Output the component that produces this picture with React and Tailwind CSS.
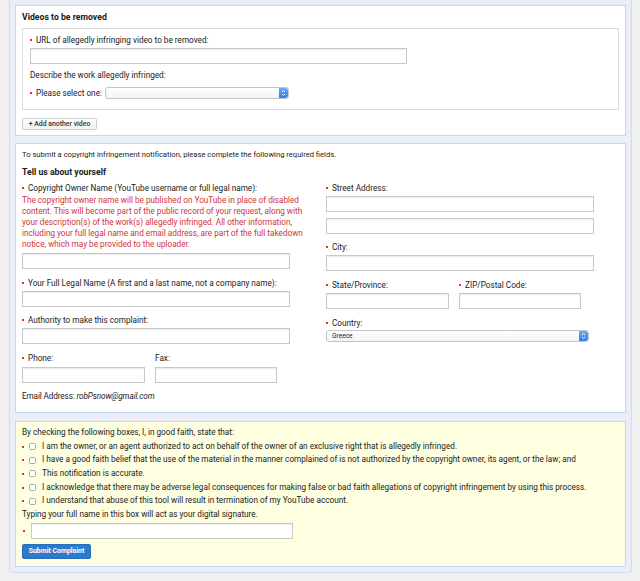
import React from "react";

const Req = ({ className = "mr-[4px]" }) => (
  <span className={`inline-block w-[2px] h-[2px] bg-[#e0303a] align-middle shrink-0 ${className}`} />
);

const Input = ({ w, className = "" }) => (
  <div
    className={`h-[16px] border border-[#c9c9c9] bg-white shadow-[inset_0_1px_1px_rgba(0,0,0,0.08)] ${className}`}
    style={{ width: w }}
  />
);

const Stepper = () => (
  <div className="w-[9px] h-full rounded-r-[3px] bg-gradient-to-b from-[#6aa9f7] to-[#2f7ee8] flex items-center justify-center">
    <svg width="5" height="8" viewBox="0 0 5 8" fill="none" stroke="white" strokeWidth="0.9">
      <path d="M1 3 L2.5 1.5 L4 3" />
      <path d="M1 5 L2.5 6.5 L4 5" />
    </svg>
  </div>
);

const Select = ({ w, value }) => (
  <div
    className="h-[12px] flex items-stretch border border-[#c5c5c5] rounded-[3px] bg-gradient-to-b from-white to-[#f3f3f3]"
    style={{ width: w }}
  >
    <div className="flex-1 flex items-center pl-[5px] text-[6.6px] text-[#222] leading-none">{value}</div>
    <Stepper />
  </div>
);

const Label = ({ req = true, children, className = "" }) => (
  <div className={`h-[10px] leading-[10px] text-[8.2px] text-[#1b1b1b] flex items-center whitespace-nowrap ${className}`}>
    {req && <Req />}
    <span>{children}</span>
  </div>
);

const Checkbox = () => (
  <span className="inline-block w-[7px] h-[7px] border border-[#a9a9a9] rounded-[1.5px] bg-white mr-[6px] shrink-0" />
);

const statements = [
  "I am the owner, or an agent authorized to act on behalf of the owner of an exclusive right that is allegedly infringed.",
  "I have a good faith belief that the use of the material in the manner complained of is not authorized by the copyright owner, its agent, or the law; and",
  "This notification is accurate.",
  "I acknowledge that there may be adverse legal consequences for making false or bad faith allegations of copyright infringement by using this process.",
  "I understand that abuse of this tool will result in termination of my YouTube account.",
];

const notice = [
  "The copyright owner name will be published on YouTube in place of disabled",
  "content. This will become part of the public record of your request, along with",
  "your description(s) of the work(s) allegedly infringed. All other information,",
  "including your full legal name and email address, are part of the full takedown",
  "notice, which may be provided to the uploader.",
];

export default function App() {
  return (
    <div className="min-h-[581px] bg-[#f0f0f0] pl-[9px] font-['Roboto',sans-serif] text-[#1b1b1b]">
      <div className="w-[623px] bg-[#e9eef9] border-x border-b border-[#d3dcef] rounded-b-[4px] px-[5px] pt-[5px] pb-[5px]">
        {/* Videos to be removed */}
        <div className="bg-white border border-[#c7d5ef] px-[6px] pt-[6px] pb-[5px]">
          <div className="text-[8.7px] font-bold leading-[10px]">Videos to be removed</div>
          <div className="mt-[6px] border border-[#dcdcdc] px-[7px] pt-[6px] pb-[10px]">
            <Label>URL of allegedly infringing video to be removed:</Label>
            <Input w={377} className="mt-[3px]" />
            <Label req={false} className="mt-[6px]">Describe the work allegedly infringed:</Label>
            <div className="mt-[7px] flex items-center h-[12px]">
              <Label>Please select one:</Label>
              <div className="ml-[3px]">
                <Select w={184} value="" />
              </div>
            </div>
          </div>
          <div className="mt-[8px] w-[75px] h-[12px] border border-[#cfcfcf] rounded-[2px] bg-gradient-to-b from-white to-[#f0f0f0] flex items-center justify-center text-[6.9px] font-medium text-[#333]">
            + Add another video
          </div>
        </div>

        {/* Tell us about yourself */}
        <div className="mt-[7px] bg-white border border-[#c7d5ef] px-[6px] pt-[6px] pb-[11px]">
          <div className="text-[7.6px] leading-[10px] whitespace-nowrap">
            To submit a copyright infringement notification, please complete the following required fields.
          </div>
          <div className="mt-[7px] text-[8.7px] font-bold leading-[10px]">Tell us about yourself</div>
          <div className="mt-[6px] flex">
            <div className="w-[304px]">
              <Label>Copyright Owner Name (YouTube username or full legal name):</Label>
              <div className="mt-[1.5px] text-[8.2px] leading-[11px] text-[#d0323a]">
                {notice.map((l) => (
                  <div key={l} className="whitespace-nowrap">{l}</div>
                ))}
              </div>
              <Input w={268} className="mt-[3.5px]" />
              <Label className="mt-[9px]">Your Full Legal Name (A first and a last name, not a company name):</Label>
              <Input w={268} className="mt-[3px]" />
              <Label className="mt-[8px]">Authority to make this complaint:</Label>
              <Input w={268} className="mt-[3px]" />
              <div className="mt-[9px] flex gap-[10px]">
                <div>
                  <Label>Phone:</Label>
                  <Input w={123} className="mt-[4px]" />
                </div>
                <div>
                  <Label req={false}>Fax:</Label>
                  <Input w={122} className="mt-[4px]" />
                </div>
              </div>
              <div className="mt-[8px] h-[10px] leading-[10px] text-[8.2px] tracking-[-0.12px] whitespace-nowrap">
                Email Address: <span className="italic">robPsnow@gmail.com</span>
              </div>
            </div>
            <div className="w-[268px]">
              <Label>Street Address:</Label>
              <Input w={268} className="mt-[3px]" />
              <Input w={268} className="mt-[6px]" />
              <Label className="mt-[8px]">City:</Label>
              <Input w={268} className="mt-[3px]" />
              <div className="mt-[9px] flex gap-[10px]">
                <div>
                  <Label>State/Province:</Label>
                  <Input w={123} className="mt-[3px]" />
                </div>
                <div>
                  <Label>ZIP/Postal Code:</Label>
                  <Input w={122} className="mt-[3px]" />
                </div>
              </div>
              <Label className="mt-[9px]">Country:</Label>
              <div className="mt-[2px]">
                <Select w={263} value="Greece" />
              </div>
            </div>
          </div>
        </div>

        {/* Statements */}
        <div className="mt-[8px] bg-[#fefee1] border border-[#c7d5ef] px-[6px] pt-[4px] pb-[7px] text-[8.2px] leading-[13.7px]">
          <div className="whitespace-nowrap">By checking the following boxes, I, in good faith, state that:</div>
          {statements.map((s) => (
            <div key={s} className="flex items-center h-[13.7px]">
              <Req className="mr-[5px]" />
              <Checkbox />
              <span className="whitespace-nowrap">{s}</span>
            </div>
          ))}
          <div className="whitespace-nowrap">Typing your full name in this box will act as your digital signature.</div>
          <div className="mt-[1px] flex items-center">
            <Req className="ml-[1px] mr-[6px]" />
            <Input w={262} />
          </div>
          <div className="mt-[5px] w-[69px] h-[15px] rounded-[2px] bg-[#2b7bca] border border-[#2470bd] flex items-center justify-center text-[6.9px] font-bold text-white">
            Submit Complaint
          </div>
        </div>
      </div>
    </div>
  );
}
